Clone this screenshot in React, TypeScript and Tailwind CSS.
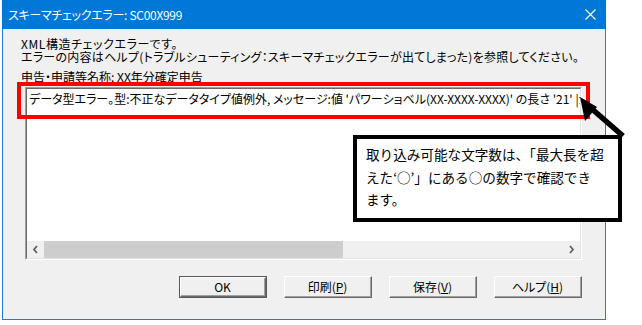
import React from "react";

const jp = "font-['Noto_Sans_CJK_JP',sans-serif] [font-feature-settings:'palt']";

function Btn({ label, def }: { label: React.ReactNode; def?: boolean }) {
  return (
    <div
      className={`w-[88px] h-[22px] ${def ? "border border-[#5a5a5a]" : ""} bg-[#f0f0f0]`}
    >
      <div className="w-full h-full border-t border-l border-white border-b border-r border-b-[#696969] border-r-[#696969]">
        <div className="w-full h-full border-b border-r border-b-[#a0a0a0] border-r-[#a0a0a0] flex items-center justify-center text-[12px] leading-[13px] text-black">
          {label}
        </div>
      </div>
    </div>
  );
}

export default function App() {
  return (
    <div className={`relative w-[642px] h-[325px] bg-white overflow-hidden ${jp}`}>
      <div className="pl-[2px]">
        <div className="w-[604px] h-[320px] flex flex-col border-l border-r border-b border-[#1a7fd4]">
          {/* title bar */}
          <div className="h-[29px] -mx-[1px] bg-[#0078d7] flex items-center justify-between pl-[6px] pr-[10px]">
            <span className="text-white text-[12px] leading-[14px] tracking-[-0.3px]">スキーマチェックエラー: SC00X999</span>
            <svg width="11" height="11" viewBox="0 0 11 11">
              <path d="M0.5 0.5 L10.5 10.5 M10.5 0.5 L0.5 10.5" stroke="white" strokeWidth="1.1" />
            </svg>
          </div>
          {/* body */}
          <div className="flex-1 bg-[#f0f0f0] pl-[18px] pt-[8px] text-black text-[12px] leading-[13px]">
            <div className="tracking-[0.6px]">XML構造チェックエラーです。</div>
            <div className="tracking-[0.25px]">エラーの内容はヘルプ(トラブルシューティング：スキーマチェックエラーが出てしまった)を参照してください。</div>
            <div className="mt-[7px]">申告・申請等名称: XX年分確定申告</div>
            <div className="mt-[4px] ml-[4px] w-[557px] h-[173px] border-t border-l border-[#a0a0a0] border-b border-r border-b-white border-r-white">
              <div className="w-full h-full border-t border-l border-[#696969] border-b border-r border-b-[#e3e3e3] border-r-[#e3e3e3] bg-white flex flex-col">
                <div className="flex-1 overflow-hidden whitespace-nowrap pl-[2px] pt-[3px]">
                  データ型エラー。型:不正なデータタイプ値例外, メッセージ:値 'パワーショベル(XX-XXXX-XXXX)' の長さ '21' |が最大長 '20' を超えています。
                </div>
                <div className="h-[17px] flex bg-[#f0f0f0]">
                  <div className="w-[17px] h-[17px] flex items-center justify-center">
                    <svg width="7" height="9" viewBox="0 0 7 9">
                      <path d="M5 1 L2 4.5 L5 8" stroke="#606060" strokeWidth="1.8" fill="none" />
                    </svg>
                  </div>
                  <div className="w-[299px] h-[17px] bg-[#cdcdcd]" />
                  <div className="flex-1" />
                  <div className="w-[17px] h-[17px] flex items-center justify-center">
                    <svg width="7" height="9" viewBox="0 0 7 9">
                      <path d="M2 1 L5 4.5 L2 8" stroke="#606060" strokeWidth="1.8" fill="none" />
                    </svg>
                  </div>
                </div>
              </div>
            </div>
            <div className="mt-[16px] ml-[4px] w-[557px] flex justify-end gap-[17px]">
              <Btn def label="OK" />
              <Btn label={<span>印刷(<span className="underline">P</span>)</span>} />
              <Btn label={<span>保存(<span className="underline">V</span>)</span>} />
              <Btn label={<span>ヘルプ(<span className="underline">H</span>)</span>} />
            </div>
          </div>
        </div>
      </div>

      {/* red highlight */}
      <div className="absolute left-[17px] top-[82px] w-[573px] h-[37px] border-[4px] border-[#ff0000]" />

      {/* arrow */}
      <svg className="absolute left-[570px] top-[88px]" width="60" height="52" viewBox="0 0 60 52">
        <line x1="22" y1="21" x2="53" y2="48" stroke="black" strokeWidth="5.5" />
        <polygon points="10,9 27,19 15,33" fill="black" />
      </svg>

      {/* callout */}
      <div className="absolute left-[353px] top-[135px] w-[269px] h-[87px] border-[4px] border-black bg-white pl-[9px] pt-[4px] text-black text-[13.6px] leading-[22.5px] [font-feature-settings:normal]">
        取り込み可能な文字数は、「最大長を超<br />
        えた‘○’」にある○の数字で確認でき<br />
        ます。
      </div>
    </div>
  );
}
